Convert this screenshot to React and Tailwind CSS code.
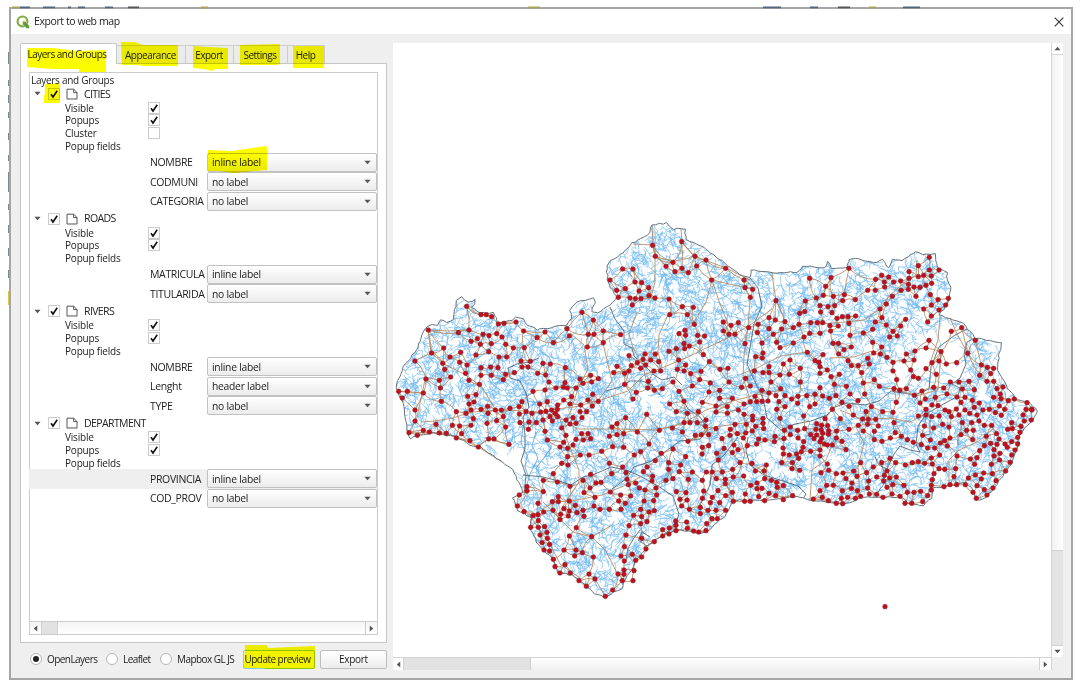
import React from 'react';

/* ---------- Map data: city points, in thirds of a pixel from each tile's origin ---------- */
const TILES = [
  [390, 200, '230,319 273,344 289,344 305,350 325,372 342,370 378,366 115,390 205,398 237,390 401,393 465,396 441,413 490,428 531,386 538,408 576,337 610,360 640,393 595,403 612,403 592,441 640,428 279,403 297,407 320,401 336,411 262,416 243,424 271,433 304,431 347,433 370,444 403,443 296,455 258,465 161,444 212,457 125,459 180,471 75,483 209,487 231,495 158,490 164,508 327,471 350,471 393,483 421,484 396,501 414,501 459,490 481,492 443,520 467,525 273,503 302,501 324,503 227,520 273,526 304,526 347,523 373,518 340,539 182,531 237,541 268,553 108,537 148,541 151,564 26,574 52,574 37,594 100,579 154,604 75,630 75,663 429,574 465,570 477,546 498,564 526,503 520,562 532,564 525,548 558,564 570,537 579,550 602,526 605,546 625,536 608,583 594,600 625,604 681,499 671,518 233,589 258,584 252,606 237,612 243,630 228,640 199,635 273,628 293,619 294,640 316,630 334,630 360,625 387,620 396,605 408,635 388,642 426,640 449,612 472,605 340,650 320,662 291,670 250,656 209,678 187,676 138,673 243,676 347,681 390,668 417,666 439,668 415,688 459,660 465,694 472,720 57,698 82,706 100,691 118,696 148,699 169,700 199,714 215,701 240,722 265,741 296,717 312,717 357,733 452,636 468,634 485,630 495,640 480,650 503,650 487,663 502,628 503,615 521,600 540,612 545,590 572,615 570,635 590,635 607,618 576,653 549,653 528,660 515,684 540,672 558,670 528,706 521,727 510,741 533,745 549,735 558,718 575,701 594,701 602,716 580,720 533,770 571,765 597,765 635,754'],
  [600, 200, '158,136 245,125 166,169 285,169 318,180 219,187 198,199 246,205 290,198 265,218 225,215 377,205 68,207 99,207 30,240 335,240 105,246 125,248 50,271 76,266 117,273 146,263 55,292 90,294 106,296 123,296 147,287 165,294 207,297 97,315 247,320 280,322 209,344 262,344 283,373 432,240 435,263 458,268 451,292 528,302 629,235 693,233 677,259 649,294 670,286 616,303 700,289 660,317 684,320 704,317 662,336 696,338 614,335 599,340 507,353 526,360 555,365 597,373 580,383 545,387 507,386 474,373 472,398 446,383 415,368 370,366 393,376 370,393 387,403 405,403 435,431 486,429 520,403 530,427 540,443 580,429 612,411 629,400 660,400 632,368 652,368 668,368 711,355 690,377 692,393 715,378 699,430 715,430 622,457 645,482 657,487 669,464 10,393 62,404 10,429 255,391 237,401 257,406 293,406 314,408 299,426 252,431 268,438 254,446 229,446 207,454 166,462 135,462 129,478 152,480 112,488 94,497 137,495 122,505 87,467 176,485 162,513 182,513 51,500 41,518 74,520 87,513 74,553 145,544 143,564 163,571 187,566 109,577 99,597 310,464 328,485 236,480 257,495 232,508 252,513 272,521 303,514 219,546 299,539 277,558 237,574 331,549 327,576 360,508 384,505 387,546 359,571 359,595 397,595 425,562 437,535 451,558 467,470 489,459 487,474 463,513 489,518 507,500 507,518 513,546 550,492 570,480 540,525 568,523 601,505 601,546 660,500 660,520 682,510 693,530 486,571 465,589 486,604 507,579 504,603 528,587 542,566 555,587 537,605 555,620 530,628 575,597 593,610 594,589 620,587 645,583 629,620 645,612 668,588 688,595 660,563 697,628 703,553 470,605 451,605 432,612 415,630 432,643 382,620 382,640 348,618 348,636 307,607 252,604 209,612 229,635 262,640 295,635 140,643 77,653 51,671 36,681 28,709 51,704 71,701 112,696 178,691 217,684 147,732 122,755 103,765 71,742 38,740 5,754 184,760 219,747 252,668 270,668 292,668 318,660 316,679 247,696 286,706 304,704 326,704 264,724 348,686 307,742 326,737 306,762 257,770 366,716 350,760 372,745 391,688 405,673 390,706 412,701 430,714 437,699 439,673 457,693 467,679 458,648 458,660 489,655 489,670 491,686 442,737 414,749 402,735 397,758 470,732 476,717 495,720 525,709 523,725 540,655 553,691 571,681 571,704 593,691 552,716 549,744 550,762 568,765 611,648 614,686 594,714 611,725 632,704 650,671 665,676 683,677 648,688 664,690 686,692 675,656 650,705 665,715 685,703 642,716 660,725 673,732 697,735 710,693 660,750 632,754 609,742 590,762 660,768'],
  [820, 200, '328,172 295,197 328,210 357,210 334,228 87,205 32,233 185,226 206,231 167,238 193,246 221,246 242,243 267,215 267,235 295,230 311,226 265,253 194,261 166,271 143,271 243,271 265,268 282,261 300,262 318,256 335,250 17,259 10,287 41,289 73,284 68,302 106,299 217,289 199,312 288,289 331,284 354,299 385,295 377,315 334,315 311,327 357,330 334,348 323,366 180,327 26,320 42,317 35,338 50,355 67,350 84,350 107,348 6,368 30,378 33,393 56,378 87,370 186,353 166,366 199,375 257,358 242,378 219,394 232,408 209,411 158,388 130,399 90,406 158,427 185,441 94,441 40,430 57,430 72,449 56,462 10,464 143,475 161,459 181,462 201,472 219,487 148,492 84,482 94,497 115,497 125,518 219,513 259,462 285,453 318,444 327,421 394,394 425,383 466,421 363,455 443,460 252,483 282,480 336,488 357,483 379,492 410,488 318,506 272,510 349,523 280,530 295,535 484,495 502,502 521,505 512,521 479,526 501,544 521,544 22,510 58,523 33,531 44,554 79,559 130,549 163,539 178,559 230,539 222,566 239,571 259,566 283,586 306,573 341,562 371,564 391,546 417,546 447,544 381,582 346,592 427,567 463,569 435,592 411,591 457,601 478,609 423,607 531,566 549,561 541,582 521,592 543,596 565,602 583,597 538,618 621,608 618,628 635,628 636,630 634,660 613,663 609,645 7,589 28,595 48,587 90,582 134,582 114,602 66,607 38,627 87,619 154,620 138,635 188,635 219,637 229,607 300,609 316,597 318,628 336,615 354,617 375,630 387,635 394,650 409,627 417,645 435,630 449,640 471,645 463,622 489,630 508,628 526,638 544,646 554,628 335,650 357,648 318,645 100,645 61,656 128,657 145,658 167,658 14,656 175,678 222,668 295,648 341,684 368,673 387,681 313,678 427,668 455,668 477,663 440,691 460,691 423,704 493,676 515,676 499,709 530,701 537,717 458,719 575,668 563,688 577,686 603,679 600,697 593,712 593,732 575,725 555,732 6,676 24,676 24,690 47,697 49,714 66,724 78,749 8,700 5,730 22,735 8,714 87,688 115,676 130,693 143,673 163,694 163,719 186,724 211,714 226,698 244,709 262,719 280,727 304,734 331,720 308,706 323,744 344,744 361,729 374,722 390,714 382,738 359,765 411,768 334,774 210,775 493,737 512,730 531,733 522,749 479,752 540,760 522,768 585,750 575,765 471,773 451,777'],
  [480, 420, '264,110 302,105 326,105 365,95 245,130 264,135 220,161 190,181 232,186 190,215 141,200 141,213 118,225 112,258 132,275 270,199 309,181 332,163 348,189 363,187 330,204 312,218 391,216 345,232 395,161 388,130 428,141 438,158 441,178 445,194 467,189 478,204 495,210 461,105 482,95 526,122 501,141 490,155 518,169 516,183 528,204 543,100 566,128 566,148 602,135 598,155 579,87 618,110 667,102 711,100 637,156 679,156 697,156 625,178 667,181 709,176 579,176 558,181 589,215 618,218 671,213 714,212 174,250 217,245 235,230 235,245 268,243 219,271 191,276 174,284 159,287 175,302 152,322 175,322 194,320 201,337 180,345 202,355 186,368 209,373 192,390 209,393 252,390 288,390 307,398 284,408 340,411 220,418 225,440 255,434 240,459 271,459 297,482 319,499 327,462 345,477 335,350 268,348 289,323 242,283 252,266 268,273 265,288 286,256 291,278 309,271 312,289 240,299 342,258 360,268 388,268 416,243 436,250 422,225 423,268 452,228 482,268 461,286 485,290 501,305 507,276 523,272 492,243 521,242 530,225 600,238 621,240 605,258 628,268 661,262 661,281 684,271 708,271 696,296 712,296 667,235 697,232 482,311 447,317 438,345 485,355 433,380 423,408 457,403 433,423 467,421 485,411 498,387 523,365 548,348 548,329 568,324 567,342 588,332 587,303 588,316 620,306 622,325 641,333 656,336 678,332 462,452 432,450 432,463 414,462 427,482 459,482 398,510 376,529 398,79 430,82 508,72'],
  [700, 420, '18,156 36,156 67,156 98,148 100,171 131,168 49,176 76,178 76,191 166,153 192,153 199,135 156,130 120,128 245,128 277,128 276,146 299,151 296,115 268,105 252,102 304,95 332,87 357,112 382,132 386,151 363,158 409,161 429,159 461,153 438,176 471,169 500,158 520,141 545,128 482,128 456,189 506,183 530,171 571,115 587,128 616,135 637,128 655,125 674,130 697,132 702,161 717,146 693,115 697,179 694,196 694,210 683,227 561,153 553,166 551,183 569,174 589,171 578,194 561,202 612,196 622,217 642,217 662,214 600,229 576,222 549,232 530,223 508,222 503,204 472,212 454,206 427,212 443,232 482,229 466,235 424,235 428,251 409,250 385,242 367,232 340,237 360,212 380,196 400,196 278,227 250,239 250,197 232,202 230,187 214,181 194,176 171,189 171,206 186,205 207,220 227,227 176,230 194,242 152,196 136,222 134,244 151,244 100,244 97,217 77,227 54,212 10,212 6,182 41,232 31,248 59,248 77,271 49,271 23,270 5,263 5,235 36,296 54,296 20,311 18,331 2,337 615,250 635,250 668,245 555,560 55,120 50,100 96,97 72,85'],
  [880, 380, '228,227 270,237 291,233 284,253 299,212 340,210 360,220 342,228 359,240 334,253 390,186 382,202 400,207 396,225 390,247 377,273 348,302 339,324 321,345 289,355 313,329 291,317 279,337 304,297 286,285 311,279 337,281 265,294 256,314 230,314 210,314 192,320 222,290 227,266 194,268 178,265 178,225 163,252 158,299 155,322 202,197 182,190 163,204 143,204 212,174 242,163 260,151 279,153 314,197 333,189 353,187 357,176 319,169 348,161 278,180 412,191 413,175 421,156'],
];
/* Tiles overlap at their seams, so a town already listed within 3px is dropped */
const CITIES = [];
TILES.forEach(([ox, oy, s], t) =>
  s.split(' ').forEach((p) => {
    const [a, b] = p.split(',').map(Number);
    const x = ox + a / 3, y = oy + b / 3;
    if (!CITIES.some(([u, v, w]) => w !== t && Math.hypot(u - x, v - y) < 3)) CITIES.push([x, y, t]);
  })
);

const OUTLINE = [
  396,387,403,367,417,350,421,338,425,328,429,325,438,325,440,320,444,320,447,323,453,320,455,310,457,300,461,297,468,302,475,300,475,304,472,308,480,313,493,313,496,318,498,323,506,322,512,320,516,317,523,319,525,323,537,330,547,328,567,325,571,318,570,310,577,302,585,300,593,298,596,303,592,308,592,312,598,313,607,307,613,303,617,297,612,290,608,282,607,272,608,263,620,255,629,247,632,243,641,239,650,232,652,225,667,223,673,229,685,229,686,240,703,247,711,253,725,263,740,275,750,278,751,270,777,273,798,272,803,266,825,268,827,262,832,268,847,268,849,259,855,258,873,263,883,260,889,268,893,260,902,260,908,256,916,251,923,255,935,254,937,267,947,272,947,280,951,287,948,303,939,315,963,323,970,332,975,338,990,341,1002,343,999,355,998,370,1006,385,1015,398,1028,402,1038,411,1033,420,1020,433,1018,447,1012,463,1005,472,995,487,987,497,980,500,975,498,972,488,963,483,943,487,933,488,932,498,923,505,910,505,902,497,882,497,860,497,852,502,843,505,828,502,810,500,800,497,783,498,763,501,733,500,725,517,717,522,710,530,700,533,695,532,677,530,663,535,647,547,640,555,635,563,630,573,623,583,623,588,605,597,595,594,587,587,572,575,558,573,552,558,538,545,530,527,532,518,518,510,513,498,523,492,513,470,502,462,480,447,470,445,457,437,433,433,417,435,410,439,407,430,403,403,
];

/* Province borders and main rivers */
const BORDERS = [
  'M610 307l5 12 9 12 0 13 8 4 2 8 10 9 10 10 8 5 12-3 8 8',
  'M508 368l9-4 12-2 10-4M508 368l2 10 10 3 6 12 3 14-6 10 2 18 0 14-4 12 5 14-2 20',
  'M750 278l8 10 4 18-8 18-3 18-4 22 8 18 8 16 4 20 14 12 14-6 16-3 16-6 8-8 12-4 18 2 14-4 12-10 24 4 14-6 2-22 8-20 16-12 12-6',
  'M958 445l0-10M975 338l-8 4-3 12 2 10-6 14-8 6 8 4-2 8-18 10-14 8-8 12-2 18 4 8-10-2-10-4-6 8-7 15-8-4-4-8',
  'M523 475l20 2 16 4 12 4 12-8 12-3 16-7 15 3 14 6 18 10 15 10 6 18-4 12-16 12-12 8-9-6 4-8 8 5',
  'M640 530l-6 8-6 10-2 12M748 437l-2 14 4 14 14 10 16 5 18 6 8 8-4 6',
  'M660 395l-8-10-10-4-12 0-10 6-14 4M700 505l10-20 2-20 12-10 14-18',
  'M680 395l8 14 12 8 8 12-8 10-20 2-14 10-14 10-18 6-8 12-14 10',
  'M930 420l0 14-8 2M880 460l4 12 0 12-6 8',
];

/* Stretches with hardly any streams: cx, cy, rx, ry */
const HOLES = [
  [510, 462, 26, 20], [938, 352, 26, 30], [908, 372, 20, 14], [766, 454, 12, 9],
  [650, 400, 9, 6], [560, 468, 7, 5], [705, 480, 6, 8], [470, 434, 12, 4], [606, 350, 6, 6],
];

function rng(seed) {
  let a = seed;
  return () => {
    a = (a + 0x6d2b79f5) | 0;
    let t = Math.imul(a ^ (a >>> 15), 1 | a);
    t = (t + Math.imul(t ^ (t >>> 7), 61 | t)) ^ t;
    return ((t ^ (t >>> 14)) >>> 0) / 4294967296;
  };
}

function inside(x, y) {
  let c = false;
  const n = OUTLINE.length / 2;
  for (let i = 0, j = n - 1; i < n; j = i++) {
    const xi = OUTLINE[2 * i], yi = OUTLINE[2 * i + 1];
    const xj = OUTLINE[2 * j], yj = OUTLINE[2 * j + 1];
    if (yi > y !== yj > y && x < ((xj - xi) * (y - yi)) / (yj - yi) + xi) c = !c;
  }
  return c;
}

/* Roughens the coast and frontier with small deterministic kinks */
function buildOutline() {
  const r = rng(5);
  const out = [];
  const n = OUTLINE.length / 2;
  for (let i = 0; i < n; i++) {
    const x = OUTLINE[2 * i], y = OUTLINE[2 * i + 1];
    const j = (i + 1) % n;
    const u = OUTLINE[2 * j], v = OUTLINE[2 * j + 1];
    const steps = Math.max(1, Math.round(Math.hypot(u - x, v - y) / 3.5));
    for (let k = 0; k < steps; k++) {
      const f = k / steps;
      out.push(`${(x + (u - x) * f + (r() - 0.5) * 1.5).toFixed(1)},${(y + (v - y) * f + (r() - 0.5) * 1.5).toFixed(1)}`);
    }
  }
  return out.join(' ');
}

/* Branching streams: each walks along a slowly turning heading and throws side creeks */
function buildRivers() {
  const r = rng(91);
  let d = '';
  const walk = (x, y, a, n, depth) => {
    d += `M${x.toFixed(1)} ${y.toFixed(1)}`;
    const kids = [];
    for (let i = 0; i < n; i++) {
      a += (r() - 0.5) * 1.2;
      x += Math.cos(a) * 2.1;
      y += Math.sin(a) * 2.1;
      d += `L${x.toFixed(1)} ${y.toFixed(1)}`;
      if (depth < 1 && r() < 0.45) kids.push([x, y, a + (r() < 0.5 ? -0.8 : 0.8)]);
    }
    kids.forEach(([kx, ky, ka]) => walk(kx, ky, ka, 2 + Math.floor(r() * 3), depth + 1));
  };
  const step = 6.3;
  for (let gy = 222; gy < 598; gy += step) {
    for (let gx = 396; gx < 1038; gx += step) {
      const x = gx + r() * step, y = gy + r() * step;
      if (!inside(x, y)) continue;
      if (HOLES.some(([cx, cy, rx, ry]) => ((x - cx) / rx) ** 2 + ((y - cy) / ry) ** 2 < 1)) continue;
      const flow = Math.sin(x / 31) + Math.cos(y / 27) + 1.2 + (r() < 0.5 ? Math.PI : 0);
      walk(x, y, flow + (r() - 0.5) * 1.4, 4 + Math.floor(r() * 4), 0);
    }
  }
  return d;
}

/* Road net: every town is joined to its closest neighbours with a slight bend */
function buildRoads() {
  const r = rng(7);
  const seen = new Set();
  let d = '';
  CITIES.forEach(([x, y], i) => {
    if (y > 600) return;
    CITIES.map(([u, v], j) => [Math.hypot(u - x, v - y), j])
      .filter(([q, j]) => j !== i && q > 2 && q < 38)
      .sort((a, b) => a[0] - b[0])
      .slice(0, 3)
      .forEach(([q, j], k) => {
        const key = Math.min(i, j) + '-' + Math.max(i, j);
        if (seen.has(key) || (k === 2 && r() < 0.3)) return;
        seen.add(key);
        const [u, v] = CITIES[j];
        const b = (r() - 0.5) * 0.5;
        d += `M${x.toFixed(1)} ${y.toFixed(1)}Q${((x + u) / 2 + (v - y) * b).toFixed(1)} ${((y + v) / 2 - (u - x) * b).toFixed(1)} ${u.toFixed(1)} ${v.toFixed(1)}`;
      });
  });
  return d;
}

const COAST = buildOutline();
const RIVERS = buildRivers();
const ROADS = buildRoads();
const MAIN_ROADS =
  'M428 330l20 1 20-1 12 4 M428 330l3 23 15 12 20 10 16 12 12 20 4 8 M425 380l-3 14-6 28 M652 225l1 20 2 12 0 25 -4 15 M653 245l-20-1 M681 229l1 13 12 14 32 12 24 12 M655 257l20 4 14-3 11-8 M712 280l-6 22-12 20 M712 280l30 7 M712 280l8 24 8 20-4 12 M750 300l-2 26-4 30-1 22 8 24 M637 312l-8 22 4 14 10 18 4 18 M668 315l-9 20-1 17 4 16 M570 333l14 12 4 24-10 20-8 24-4 6 M603 343l5 22 4 16 M612 381l-14 20-24 6-18 2 M598 401l30-10 16-16 20-8 24-10 16-8 22-10 24-14 22-16 M557 415l-30-4-26-1-30 2-18 6-18 3-14 1 M557 415l20 14 40 0 40 1 25-6 24-14 30-10 24-6 24-4 M557 410l10 30 12 30 0 12-16 24-6 14 M772 273l2 15 2 12 6 14 M940 316l-2 24-9 26 12-14 M941 352l-3 38-22 6-18-6 M950 318l6 14 12 22 8 16 8 6 M880 309l-16 11-20 2-24 2 M880 309l10-14 14-12 12-8 1-15 M830 358l24-1 18-6 M807 352l-26 4-24 12-16 6 M840 410l24 10 26-2 20 4 16-8 M949 460l10-10 20-9 14-12 M949 460l0 22 M518 504l14 12 22-14 18-1 30-6 24-10 14-8 M530 516l20 28 10 20 20 14 M543 502l30 30 19 5 20-12 M592 537l14 14 12 24 M690 441l24-14 30-4 M733 500l-6-14 12-14 6-18-4-12 M810 500l2-30 14-10 8-20 M860 497l-2-30 6-24 -8-16';
/* Coast road from Huelva to the Guadalquivir marshes */
const COAST_ROAD = 'M408 432l28 1 20 3 14 7 10 5 22 14';

/* ---------- Small widgets ---------- */
function Tick({ on = true }) {
  return (
    <span className="flex h-3 w-3 items-center justify-center border border-[#cccccc] bg-white">
      {on && (
        <svg viewBox="0 0 10 10" className="h-[10px] w-[10px]">
          <path d="M2 5.2 L4 8 L8.2 1.8" fill="none" stroke="#111" strokeWidth="1.6" />
        </svg>
      )}
    </span>
  );
}

function Arrow({ dir = 'down' }) {
  const d = {
    down: 'M0.5 2h7L4 6z',
    up: 'M0.5 6h7L4 2z',
    left: 'M6 0.5v7L2 4z',
    right: 'M2 0.5v7L6 4z',
  }[dir];
  return (
    <svg viewBox="0 0 8 8" className="h-[7px] w-[7px] shrink-0">
      <path d={d} fill="#555" />
    </svg>
  );
}

function Combo({ name, value, active }) {
  return (
    <div className={`flex h-[19.6px] items-center ${active ? 'bg-[#efefef]' : ''}`}>
      <span className="w-[178px] pl-[121px] text-[10.5px] tracking-[-0.35px]">{name}</span>
      <span className="flex h-[19px] w-[170px] items-center justify-between rounded-[2px] border border-[#c2c2c2] bg-linear-to-b from-white to-[#ececec] pr-[5px] pl-1 text-[10.3px] tracking-[-0.25px]">
        {value}
        <Arrow />
      </span>
    </div>
  );
}

function Layer({ name, cluster, fields }) {
  const opts = [['Visible', true], ['Popups', true]];
  if (cluster) opts.push(['Cluster', false]);
  return (
    <div>
      <div className="flex h-[14.9px] items-center">
        <span className="flex w-[19px] pl-[5px]"><Arrow /></span>
        <Tick />
        <svg viewBox="0 0 12 12" className="ml-[6px] h-3 w-3">
          <path d="M1 1.2h6.8l3.2 3.4v6.4H1zM7.6 1.2v3.4H11" fill="white" stroke="#555" strokeWidth="1" />
        </svg>
        <span className="ml-[6px] text-[10.5px] tracking-[-0.6px]">{name}</span>
      </div>
      {opts.map(([label, on]) => (
        <div key={label} className="flex h-[12.8px] items-center">
          <span className="w-[119px] pl-[36px]">{label}</span>
          <Tick on={on} />
        </div>
      ))}
      <div className="flex h-[12.8px] items-center pl-[36px]">Popup fields</div>
      {fields.map(([n, v, a]) => (
        <Combo key={n} name={n} value={v} active={a} />
      ))}
    </div>
  );
}

function Radio({ label, on, className }) {
  return (
    <span className={`flex shrink-0 items-center gap-[5px] ${className}`}>
      <span className="flex h-3 w-3 shrink-0 items-center justify-center rounded-full border border-[#b5b5b5] bg-white">
        {on && <span className="h-[6px] w-[6px] rounded-full bg-[#222]" />}
      </span>
      {label}
    </span>
  );
}

const LAYERS = [
  { name: 'CITIES', cluster: true, fields: [['NOMBRE', 'inline label'], ['CODMUNI', 'no label'], ['CATEGORIA', 'no label']] },
  { name: 'ROADS', fields: [['MATRICULA', 'inline label'], ['TITULARIDA', 'no label']] },
  { name: 'RIVERS', fields: [['NOMBRE', 'inline label'], ['Lenght', 'header label'], ['TYPE', 'no label']] },
  { name: 'DEPARTMENT', fields: [['PROVINCIA', 'inline label', true], ['COD_PROV', 'no label']] },
];

function MapView() {
  return (
    <svg viewBox="393 43 658 614" className="h-[614px] w-[658px] shrink-0 bg-white">
      <clipPath id="region"><polygon points={COAST} /></clipPath>
      <g clipPath="url(#region)" fill="none">
        <path d={RIVERS} stroke="#6fbaf3" strokeWidth="0.65" />
        <path d="M523 425l-2 18 6 12-2 12 5 14 M536 432l-4 14 6 12-8 16-4 14 M552 446l-8 12-8 10 4 8" stroke="#6aa9d8" strokeWidth="0.9" />
        <path d="M934 328l6 14 2 14-6 12-8 14 M925 350l8-12 M970 355l-14 12 M905 378l14-10" stroke="#7cc0f4" strokeWidth="0.7" />
        <path d={BORDERS.join(' ')} stroke="#40566a" strokeWidth="0.8" strokeLinejoin="round" />
      </g>
      <g fill="none" stroke="#b5885a" strokeWidth="0.85">
        <path d={ROADS} />
        <path d={MAIN_ROADS} />
        <path d={COAST_ROAD} />
      </g>
      <polygon points={COAST} fill="none" stroke="#66747f" strokeWidth="1" strokeLinejoin="round" />
      <g fill="#c4101c" stroke="#7c1a22" strokeWidth="0.5">
        {CITIES.map(([x, y], i) => (
          <circle key={i} cx={x} cy={y} r="2.35" />
        ))}
      </g>
    </svg>
  );
}

const TABS = [
  ['Appearance', 'w-[69px]'],
  ['Export', 'w-[48px]'],
  ['Settings', 'w-[54px]'],
  ['Help', 'w-[37px]'],
];

export default function App() {
  return (
    <div className="relative h-[687px] w-[1081px] overflow-hidden bg-white pt-[7px] pl-[9px] font-['Open_Sans','Noto_Sans',sans-serif] text-[10px] leading-none tracking-[-0.2px] whitespace-nowrap text-[#222]">
      <div className="flex h-[673px] w-[1064px] flex-col border-2 border-[#a6a6a6] bg-[#efefef]">
        <div className="flex h-[25px] shrink-0 items-center bg-white pr-[7px] pl-[5px]">
          <svg viewBox="0 0 14 14" className="h-[14px] w-[14px]">
            <circle cx="6.5" cy="6.4" r="4.9" fill="none" stroke="#7fae45" strokeWidth="2.2" />
            <path d="M6.6 6.6h3l3.8 4.2v2.6h-2.6L6.6 9.4z" fill="#5b9a2f" stroke="white" strokeWidth="0.5" />
            <path d="M6.6 6.6h2.6L8 8z" fill="#e8842c" />
          </svg>
          <span className="ml-1 text-[10.5px] tracking-[-0.42px]">Export to web map</span>
          <svg viewBox="0 0 10 10" className="ml-auto h-[10px] w-[10px]">
            <path d="M0.7 0.7l8.6 8.6M9.3 0.7L0.7 9.3" stroke="#333" strokeWidth="1.1" />
          </svg>
        </div>

        <div className="flex min-h-0 flex-1 pt-[9px] pl-[9px]">
          <div className="flex w-[367px] shrink-0 flex-col">
            <div className="flex h-5 items-end tracking-[-0.5px]">
              <div className="z-10 -mb-px flex h-[21px] w-[97px] items-center justify-center rounded-t-[2px] border border-b-0 border-[#c6c6c6] bg-white pr-[3px]">
                Layers and Groups
              </div>
              {TABS.map(([t, w]) => (
                <div key={t} className={`flex h-[18px] items-center justify-center border border-b-0 border-l-0 border-[#cdcdcd] bg-[#ebebeb] pr-px ${w}`}>
                  {t}
                </div>
              ))}
            </div>
            <div className="flex h-[580px] flex-col border border-[#c6c6c6] bg-white px-2 pt-2">
              <div className="flex h-[563px] flex-col border border-[#cccccc]">
                <div className="flex h-[13.4px] items-center pl-px text-[10px] tracking-[-0.28px]">Layers and Groups</div>
                <div className="-ml-px">
                  {LAYERS.map((l) => (
                    <Layer key={l.name} {...l} />
                  ))}
                </div>
                <div className="mt-auto flex h-[13px] items-stretch border-t border-[#cccccc] bg-linear-to-b from-[#f4f4f4] to-white">
                  <span className="flex w-[11px] items-center justify-center"><Arrow dir="left" /></span>
                  <span className="w-[17px] border-x border-[#d0d0d0] bg-[#e2e2e2]" />
                  <span className="ml-auto flex w-3 items-center justify-center border-l border-[#cccccc]"><Arrow dir="right" /></span>
                </div>
              </div>
            </div>
            <div className="flex h-8 items-center pl-[10px] tracking-[-0.55px]">
              <Radio label="OpenLayers" on className="w-[76px]" />
              <Radio label="Leaflet" className="w-[54px]" />
              <Radio label="Mapbox GL JS" className="w-[83px]" />
              <span className="flex h-[19px] w-[72px] shrink-0 items-center justify-center rounded-[2px] border border-[#8cc8e8] bg-[#f6f6f6] pr-[3px]">Update preview</span>
              <span className="ml-[5px] flex h-[19px] w-[67px] shrink-0 items-center justify-center rounded-[2px] border border-[#bdbdbd] bg-linear-to-b from-white to-[#ececec] tracking-[-0.3px]">Export</span>
            </div>
          </div>

          <div className="ml-[6px] flex w-[671px] shrink-0 flex-col">
            <div className="flex h-[614px]">
              <MapView />
              <div className="flex w-[12px] flex-col border-l border-[#d4d4d4] bg-linear-to-r from-[#f1f1f1] to-white">
                <span className="flex h-[12px] items-center justify-center border-b border-[#d4d4d4] bg-white"><Arrow dir="up" /></span>
                <span className="mt-[495px] h-[96px] border-y border-[#d0d0d0] bg-[#e4e4e4]" />
                <span className="flex h-[11px] items-center justify-center bg-white"><Arrow /></span>
              </div>
            </div>
            <div className="flex h-[13px] w-[659px] border-t border-r border-[#d4d4d4] bg-linear-to-b from-white to-[#f0f0f0]">
              <span className="flex w-[10px] items-center justify-center bg-white"><Arrow dir="left" /></span>
              <span className="w-[128px] border-x border-[#d0d0d0] bg-[#e2e2e2]" />
              <span className="ml-auto flex w-3 items-center justify-center border-l border-[#d4d4d4] bg-white"><Arrow dir="right" /></span>
            </div>
          </div>
        </div>
      </div>

      {/* Highlighter marks and the desktop slivers that show round the window */}
      <svg viewBox="0 0 1081 687" className="pointer-events-none absolute inset-0 z-20 h-[687px] w-[1081px] mix-blend-multiply">
        <g fill="#fcfc00">
          <path d="M27 48l26 0 24 3 29-1v22H79v-3l-25 0-27-2z" />
          <path d="M121 42l14 0 8 3h35v21h-36l-2-1h-18z" />
          <path d="M193 46l16 1 19 1v21h-13l-3 2-8-2-11-1z" />
          <path d="M240 45l40-1v20l-3 1h-37z" />
          <path d="M293 46h31v22h-31z" />
          <path d="M45 84l15-1v20H44v-8l1-1z" />
          <path d="M208 150l24 1 14-2 20-3 1 2v22l-12 1-22 2-14-2h-11z" />
          <path d="M245 645h22l1 3 47-2v23h-48l-4-1h-19z" />
        </g>
      </svg>
      <svg viewBox="0 0 1081 687" className="pointer-events-none absolute inset-0 h-[687px] w-[1081px]">
        <g strokeWidth="1.6" fill="none">
          <path d="M20 7.4h10M43 7.4h12M68 7.4h3M78 7.4h7M105 7.4h8M763 7.4h18M810 7.4h8M903 7.4h17" stroke="#53657c" />
          <path d="M838 7.4h12M128 7.4h11" stroke="#555" />
          <path d="M12 7.4h8M201 7.4h7M528 7.4h12M869 7.4h7" stroke="#a9a456" />
          <path d="M8.5 52v12M8.5 80v6M8.5 95v8M8.5 112v6M8.5 133v7M8.5 155v6M8.5 172v20M8.5 204v6M8.5 225v8M8.5 248v8M8.5 270v8" stroke="#7f8794" strokeWidth="1" />
          <path d="M8.5 291v14" stroke="#dcc83c" strokeWidth="1" />
        </g>
      </svg>
    </div>
  );
}
